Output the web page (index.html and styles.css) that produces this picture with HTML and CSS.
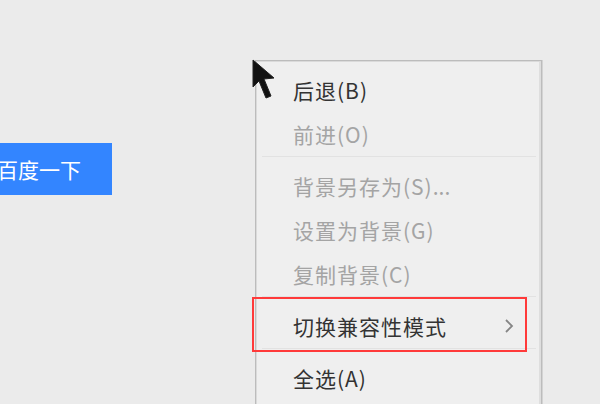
FILE: index.html
```html
<!DOCTYPE html>
<html lang="zh-CN">
<head>
<meta charset="utf-8">
<title>右键菜单</title>
<link rel="stylesheet" href="styles.css">
</head>
<body>
<div class="page">
  <button class="search-btn">百度一下</button>

  <div class="menu">
    <div class="item">后退(B)</div>
    <div class="item disabled">前进(O)</div>
    <div class="sep"></div>
    <div class="item disabled">背景另存为(S)<span class="dots">...</span></div>
    <div class="item disabled">设置为背景(G)</div>
    <div class="item disabled">复制背景(C)</div>
    <div class="sep"></div>
    <div class="item has-sub">切换兼容性模式
      <svg class="chev" width="10" height="16" viewBox="0 0 10 16"><polyline points="2,2 8,8 2,14" fill="none" stroke="#858585" stroke-width="1.8"/></svg>
    </div>
    <div class="sep"></div>
    <div class="item">全选(A)</div>
  </div>

  <div class="highlight"></div>

  <svg class="cursor" width="24" height="42" viewBox="0 0 24 42">
    <polygon points="1,1 1,28 7,22 14,39 19,37 12,20 22,19" fill="#111" stroke="#222" stroke-width="1" stroke-linejoin="round"/>
  </svg>
</div>
</body>
</html>
```

FILE: styles.css
```css
html, body {
  margin: 0;
  padding: 0;
}
body {
  background: #ebebeb;
  font-family: "Noto Sans CJK SC", "Noto Sans", sans-serif;
  overflow: hidden;
}
.page {
  position: relative;
  width: 600px;
  height: 404px;
  display: flex;
  align-items: flex-start;
  overflow: hidden;
}
.search-btn {
  margin: 143px 0 0 -34px;
  width: 146px;
  height: 52px;
  border: 0;
  padding: 0;
  background: #3385ff;
  color: #fff;
  font-family: "Noto Sans CJK SC", sans-serif;
  font-size: 21px;
  text-align: center;
  line-height: 52px;
}
.menu {
  position: absolute;
  left: 255px;
  top: 60px;
  width: 285px;
  height: 336px;
  padding-top: 7px;
  background: #efefef;
  border: 1px solid #bcbcbc;
  border-bottom: 0;
  box-shadow: inset 1px 1px 0 #dadada, inset -2px 0 0 #dedede, 1px 0 0 #d3d3d3;
  overflow: hidden;
}
.item {
  height: 44px;
  display: flex;
  align-items: center;
  padding-left: 37px;
  font-size: 21px;
  letter-spacing: 1px;
  color: #333;
  position: relative;
}
.item.disabled {
  color: #a4a4a4;
}
.dots {
  letter-spacing: 0;
}
.sep {
  height: 1px;
  margin: 0 5px 7px 6px;
  background: #e2e2e2;
}
.chev {
  position: absolute;
  left: 248px;
  top: 14px;
}
.highlight {
  position: absolute;
  left: 252px;
  top: 297px;
  width: 271px;
  height: 51px;
  border: 2px solid #ff3a3a;
}
.cursor {
  position: absolute;
  left: 252px;
  top: 59px;
}
```
